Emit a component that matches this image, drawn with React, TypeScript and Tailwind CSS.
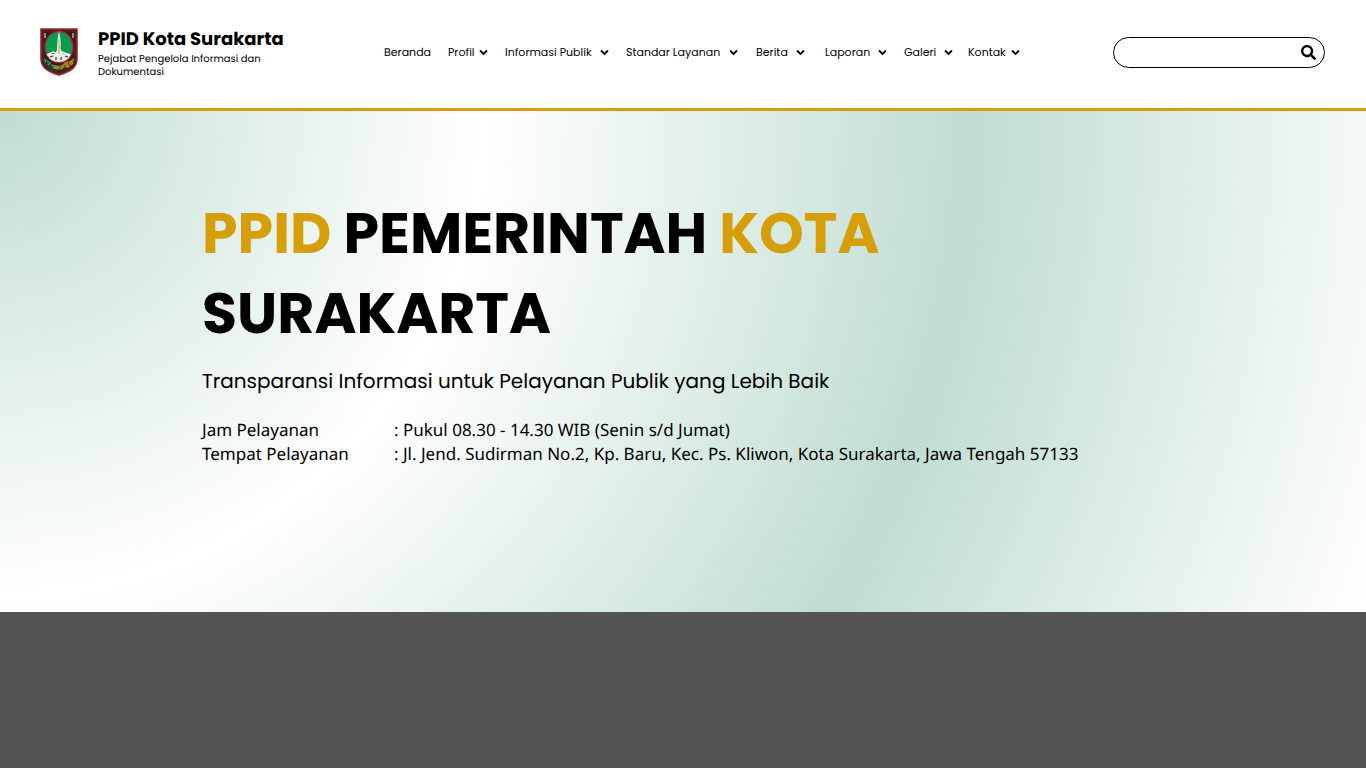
import { FaSearch } from "react-icons/fa";

const items = [
  { label: "Beranda", menu: false, cls: "w-16" },
  { label: "Profil", menu: true, cls: "w-[57px] pr-[17px]" },
  { label: "Informasi Publik", menu: true, cls: "w-[121px] pr-[17px]" },
  { label: "Standar Layanan", menu: true, cls: "w-[130px] pr-[18px]" },
  { label: "Berita", menu: true, cls: "w-[69px] pr-5" },
  { label: "Laporan", menu: true, cls: "w-[79px] pr-[17px]" },
  { label: "Galeri", menu: true, cls: "w-16 pr-[15px]" },
  { label: "Kontak", menu: true, cls: "w-[52px]" },
];

function Emblem() {
  return (
    <svg viewBox="0 0 38 48" className="h-12 w-[38px] shrink-0" role="img" aria-label="Kota Surakarta">
      <path d="M1 1H37V31C37 40 29 44 19 47C9 44 1 40 1 31Z" fill="#252321" stroke="#a9252d" strokeWidth="1.6" />
      <path d="M3 3H35V30C35 38 28 42 19 45C10 42 3 38 3 30Z" fill="none" stroke="#7b1c20" strokeWidth="1" />
      <path d="M3 29Q6 35 16 37L18 45Q4 41 3 29Z" fill="#263b2a" />
      <path d="M4 31l2 1-1 2M7 33l3 2-2 2M11 37l3 1-1 2" stroke="#4e9b64" strokeWidth="1.3" fill="none" />
      <path d="M13 40l2-3 4 1 3-1 3-3 5-1 4-3-1 6-5 4-3-1-4 3-6-1Z" fill="#a8801d" />
      <path d="M20 38v4m4-5 2 4m2-7 2 4" stroke="#5c4315" strokeWidth="1" />
      <ellipse cx="19" cy="19" rx="14" ry="15.5" fill="#0b9b50" stroke="#b51f32" strokeWidth="1.5" />
      <path d="M7 26H31Q28 34 19 34Q10 34 7 26Z" fill="#eceae2" />
      <path d="M7 27l6-3 4 2 5-2 8 3" fill="none" stroke="#fff" strokeWidth="1.5" />
      <path d="M15 26l2-4 .5-11L19 3l1.5 8 .5 11 2 4Z" fill="#e9f2df" />
      <path d="M19 11V26M19 18l2 2-3 3" stroke="#c4a94e" strokeWidth="1" fill="none" />
      <path d="M10 29l3-1m3 4v-3m5 3v-3m7 0-3-1" stroke="#34362d" strokeWidth="1.2" />
      <path d="M5 5v5M33 5v5" stroke="#d8d3c4" strokeWidth="1.2" />
    </svg>
  );
}

function Chevron() {
  return (
    <svg viewBox="0 0 9 7" className="h-[7px] w-[9px] shrink-0" aria-hidden="true">
      <path d="M1 1.5L4.5 5L8 1.5" fill="none" stroke="black" strokeWidth="1.8" />
    </svg>
  );
}

export default function App() {
  return (
    <div className="min-h-screen bg-[#545456] font-['Poppins','Inter',sans-serif] text-black [text-rendering:geometricPrecision]">
      <header className="flex h-[111px] items-start border-b-3 border-[#d69e09] bg-white pr-[41px] pl-10">
        <a href="#beranda" className="flex w-[344px] shrink-0 pt-7">
          <Emblem />
          <span className="ml-5 w-[200px]">
            <span className="block text-lg leading-6 font-bold whitespace-nowrap">PPID Kota Surakarta</span>
            <span className="block w-[170px] text-[10px] leading-[13px]">Pejabat Pengelola Informasi dan Dokumentasi</span>
          </span>
        </a>
        <nav className="flex pt-[43px] text-[11px] leading-[18px]">
          {items.map((item) => (
            <div key={item.label} className={`${item.cls} shrink-0`}>
              {item.menu ? (
                <button type="button" className="flex w-full items-center justify-between whitespace-nowrap">
                  {item.label}
                  <Chevron />
                </button>
              ) : (
                <a href="#beranda" className="flex">{item.label}</a>
              )}
            </div>
          ))}
        </nav>
        <form role="search" className="mt-[37px] ml-auto flex h-[31px] w-[212px] items-center rounded-full border border-black pr-2 pl-3" onSubmit={(e) => e.preventDefault()}>
          <input type="search" aria-label="Cari" className="min-w-0 flex-1 outline-none" />
          <button type="submit" aria-label="Cari"><FaSearch size={15} /></button>
        </form>
      </header>
      <main className="min-h-[501px] bg-[radial-gradient(circle_at_top_left,#c0ddd1_0%,#fff_33.33%,#c0ddd1_66.67%,#fff_100%)] px-[202px] pt-[82px]">
        <h1 className="max-w-[760px] text-[57px] leading-[80px] font-bold">
          <span className="text-[#d69e09]">PPID</span> PEMERINTAH <span className="text-[#d69e09]">KOTA</span> SURAKARTA
        </h1>
        <p className="mt-[11px] text-xl leading-[34px]">Transparansi Informasi untuk Pelayanan Publik yang Lebih Baik</p>
        <table className="mt-5 font-['Noto_Sans','Open_Sans',sans-serif] text-[17px] leading-6 whitespace-nowrap">
          <tbody>
            <tr><th scope="row" className="w-[192px] text-left font-normal">Jam Pelayanan</th><td>: Pukul 08.30 - 14.30 WIB (Senin s/d Jumat)</td></tr>
            <tr><th scope="row" className="text-left font-normal">Tempat Pelayanan</th><td>: Jl. Jend. Sudirman No.2, Kp. Baru, Kec. Ps. Kliwon, Kota Surakarta, Jawa Tengah 57133</td></tr>
          </tbody>
        </table>
      </main>
    </div>
  );
}
